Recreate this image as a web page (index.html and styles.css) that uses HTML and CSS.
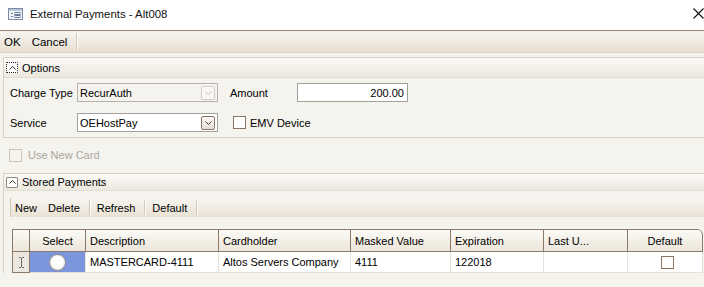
FILE: index.html
```html
<!DOCTYPE html>
<html>
<head>
<meta charset="utf-8">
<link rel="stylesheet" href="styles.css">
</head>
<body>
<div class="window">
  <div class="titlebar">
    <svg class="appicon" width="15" height="12" viewBox="0 0 15 12">
      <rect x="0.5" y="0.5" width="14" height="11" fill="#f4f6fa" stroke="#7c8aa6"/>
      <rect x="1" y="1" width="13" height="2" fill="#b9c6dc"/>
      <rect x="3" y="5" width="2" height="1" fill="#6b7a98"/>
      <rect x="3" y="8" width="2" height="1" fill="#6b7a98"/>
      <rect x="7" y="4.5" width="5" height="2" fill="none" stroke="#6b7a98" stroke-width="1"/>
      <rect x="7" y="7.5" width="5" height="2" fill="none" stroke="#6b7a98" stroke-width="1"/>
    </svg>
    <span class="title">External Payments - Alt008</span>
    <svg class="close" width="11" height="11" viewBox="0 0 11 11">
      <path d="M0.5 0.5 L10.5 10.5 M10.5 0.5 L0.5 10.5" stroke="#111" stroke-width="1.1"/>
    </svg>
  </div>
  <div class="maintb">
    <span class="tbitem">OK</span>
    <span class="tbitem">Cancel</span>
    <span class="tbsep"></span>
  </div>
  <div class="content">
    <div class="group options">
      <div class="ghead">
        <span class="toggle dotted"><svg width="7" height="4" viewBox="0 0 7 4"><path d="M0.5 3.5 L3.5 0.5 L6.5 3.5" fill="none" stroke="#333"/></svg></span>
        <span>Options</span>
      </div>
      <div class="gbody">
        <div class="frow">
          <span class="lbl">Charge Type</span>
          <span class="combo disabled"><span class="ctext">RecurAuth</span><span class="cbtn"><svg width="7" height="4" viewBox="0 0 7 4"><path d="M0.5 0.5 L3.5 3.5 L6.5 0.5" fill="none" stroke="#c4c0b8"/></svg></span></span>
          <span class="lbl2">Amount</span>
          <span class="tinput">200.00</span>
        </div>
        <div class="frow">
          <span class="lbl">Service</span>
          <span class="combo"><span class="ctext">OEHostPay</span><span class="cbtn"><svg width="7" height="4" viewBox="0 0 7 4"><path d="M0.5 0.5 L3.5 3.5 L6.5 0.5" fill="none" stroke="#4a3c30"/></svg></span></span>
          <span class="chk emv"></span>
          <span class="chklbl">EMV Device</span>
        </div>
      </div>
    </div>
    <div class="newcard">
      <span class="chk dis"></span>
      <span class="distext">Use New Card</span>
    </div>
    <div class="group stored">
      <div class="ghead small">
        <span class="toggle"><svg width="7" height="4" viewBox="0 0 7 4"><path d="M0.5 3.5 L3.5 0.5 L6.5 3.5" fill="none" stroke="#333"/></svg></span>
        <span>Stored Payments</span>
      </div>
      <div class="sbody">
        <div class="subtb">
          <span class="sitem first">New</span>
          <span class="sitem">Delete</span>
          <span class="ssep"></span>
          <span class="sitem">Refresh</span>
          <span class="ssep"></span>
          <span class="sitem">Default</span>
          <span class="ssep"></span>
        </div>
        <div class="grid">
          <div class="hcell rh"></div>
          <div class="hcell center">Select</div>
          <div class="hcell">Description</div>
          <div class="hcell">Cardholder</div>
          <div class="hcell">Masked Value</div>
          <div class="hcell">Expiration</div>
          <div class="hcell">Last U...</div>
          <div class="hcell center last">Default</div>
          <div class="dcell rh"><svg width="7" height="11" viewBox="0 0 7 11"><path d="M1 0.5 H3 M4 0.5 H6 M3.5 1 V10 M1 10.5 H3 M4 10.5 H6" stroke="#6a6a6a" fill="none"/></svg></div>
          <div class="dcell sel"><span class="radio"></span></div>
          <div class="dcell">MASTERCARD-4111</div>
          <div class="dcell">Altos Servers Company</div>
          <div class="dcell">4111</div>
          <div class="dcell">122018</div>
          <div class="dcell"></div>
          <div class="dcell center"><span class="gchk"></span></div>
        </div>
      </div>
    </div>
  </div>
</div>
</body>
</html>
```
FILE: styles.css
```css
* { box-sizing: border-box; }
html, body { margin: 0; padding: 0; }
body {
  width: 704px;
  height: 287px;
  overflow: hidden;
  background: #f5f3ee;
  font-family: "Liberation Sans", Arial, sans-serif;
  font-size: 11px;
  color: #000;
}
.titlebar {
  height: 31px;
  background: #fff;
  border-bottom: 1px solid #9d8373;
  display: flex;
  align-items: center;
  padding-left: 8px;
}
.appicon { margin-right: 7px; margin-top: -2px; }
.title { font-size: 11.4px; color: #111; margin-top: -2px; }
.close { margin-left: auto; margin-right: 0; margin-top: -4px; }
.maintb {
  height: 22px;
  background: linear-gradient(#f7f5f0 0%, #f1ede5 40%, #e7dfcf 100%);
  display: flex;
  align-items: center;
  padding-left: 4px;
  font-size: 11.5px;
  border-bottom: 1px solid #d9d3c6;
}
.tbitem { margin-right: 11px; }
.tbitem + .tbitem { margin-right: 9px; }
.tbsep { width: 2px; height: 17px; background: #cfc8b8; border-right: 1px solid #fff; }
.content {
  padding: 4px 0 0 3px;
}
.group {
  border: 1px solid #d8d2c5;
  border-right: none;
}
.ghead {
  height: 20px;
  background: linear-gradient(#fbfaf8, #ece8de);
  display: flex;
  align-items: center;
  padding-left: 2px;
  gap: 4px;
  font-size: 11px;
  border-bottom: 1px solid #e2ddd2;
}
.ghead.small { height: 17px; }
.toggle {
  width: 12px;
  height: 11px;
  border: 1px solid #8d8a84;
  background: #fdfdfc;
  display: flex;
  align-items: center;
  justify-content: center;
  border-radius: 1px;
}
.toggle.dotted { border: 1px dotted #222; }
.gbody {
  padding: 5px 0 5px 6px;
  display: flex;
  flex-direction: column;
  gap: 11px;
}
.frow {
  height: 19px;
  display: flex;
  align-items: center;
}
.lbl { width: 67px; }
.combo {
  width: 141px;
  height: 19px;
  border: 1px solid #a3a19c;
  background: #fff;
  display: flex;
  align-items: center;
  padding: 0 2px 0 2px;
}
.combo.disabled { border-color: #b6b3ad; background: #f5f3ee; }
.ctext { flex: 1; font-size: 11px; }
.cbtn {
  width: 14px;
  height: 14px;
  border: 1px solid #8a7565;
  border-radius: 2px;
  background: linear-gradient(#fbf9f6, #e7dfd5);
  display: flex;
  align-items: center;
  justify-content: center;
}
.combo.disabled .cbtn { border-color: #d2cfc8; background: #f8f7f4; }
.lbl2 { margin-left: 12px; width: 67px; }
.tinput {
  width: 111px;
  height: 19px;
  border: 1px solid #a3a19c;
  background: #fff;
  text-align: right;
  padding: 3px 3px 0 0;
  font-size: 11px;
}
.chk {
  width: 13px;
  height: 13px;
  border: 1px solid #8a7565;
  background: #fff;
  display: inline-block;
}
.emv { margin-left: 15px; margin-right: 4px; }
.newcard {
  height: 35px;
  display: flex;
  align-items: center;
  padding-left: 6px;
  padding-bottom: 1px;
}
.chk.dis { border-color: #cac6bc; background: #f5f3ee; margin-right: 6px; }
.distext { color: #aaa69c; }
.stored { border-bottom: none; }
.sbody {
  padding: 7px 0 0 6px;
}
.subtb {
  height: 19px;
  background: linear-gradient(#f7f5f0, #e9e2d3);
  border-left: 1px solid #cfc8b8;
  display: flex;
  align-items: center;
  padding-left: 4px;
}
.sitem { margin-right: 9px; }
.sitem.first { margin-right: 11px; }
.ssep { width: 2px; height: 15px; background: #cfc8b8; border-right: 1px solid #fff; margin-right: 6px; }
.grid {
  margin-top: 12px;
  margin-left: 2px;
  width: 690px;
  display: grid;
  grid-template-columns: 17px 56px 133px 132px 100px 93px 84px 75px;
  grid-template-rows: 22px 21px;
  border-left: 1px solid #8c7a68;
  border-top: 1px solid #8c7a68;
  border-top-right-radius: 5px;
  background: #fff;
}
.hcell {
  background: linear-gradient(#fbfaf6, #ece6da);
  border-right: 1px solid #8c7a68;
  border-bottom: 1px solid #8c7a68;
  display: flex;
  align-items: center;
  padding-left: 4px;
  font-size: 11px;
}
.hcell.last { border-right: 1px solid #8c7a68; border-top-right-radius: 5px; }
.center { justify-content: center; padding-left: 0; }
.dcell {
  border-right: 1px solid #e5e1d8;
  border-bottom: 1px solid #e5e1d8;
  display: flex;
  align-items: center;
  padding-left: 4px;
  font-size: 11px;
}
.dcell.rh {
  background: #ece8df;
  border-right: 1px solid #8c7a68;
  border-bottom: 1px solid #8c7a68;
  justify-content: center;
  padding-left: 0;
}
.hcell.rh { padding-left: 0; }
.dcell.sel {
  background: #7b96dc;
  justify-content: center;
  padding-left: 0;
}
.radio {
  width: 17px;
  height: 17px;
  border-radius: 50%;
  border: 1px solid #8f8f8f;
  background: radial-gradient(circle at 50% 45%, #ffffff 45%, #d6d3ca 100%);
}
.gchk {
  width: 13px;
  height: 13px;
  border: 1px solid #8a7565;
  background: #fff;
}
```
